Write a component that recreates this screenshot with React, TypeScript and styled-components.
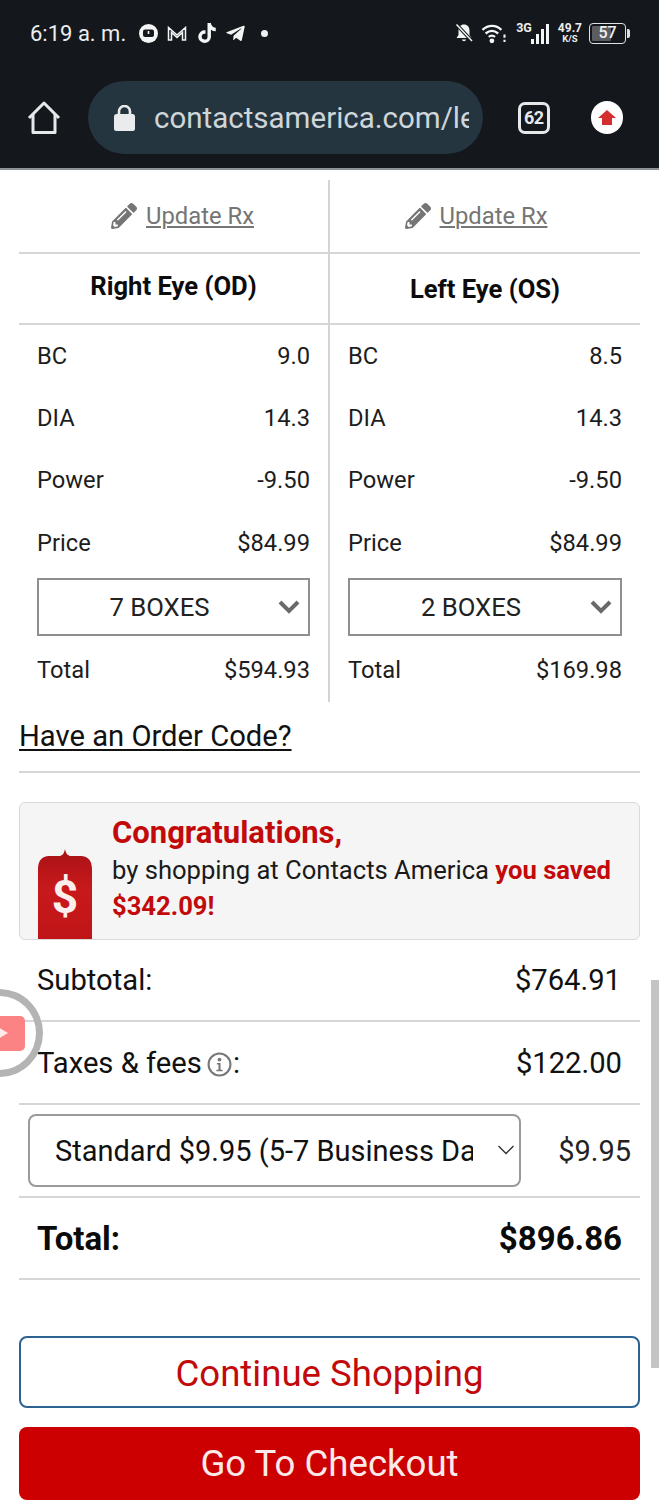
import React from "react";
import styled, { createGlobalStyle } from "styled-components";
import { FaPencilAlt, FaTiktok, FaTelegramPlane } from "react-icons/fa";

const Global = createGlobalStyle`
  html, body { margin: 0; padding: 0; background: #fff; }
  body { width: 659px; height: 1500px; overflow: hidden; font-family: Roboto, "Liberation Sans", sans-serif; color: #111; }
  * { box-sizing: border-box; }
`;

const Page = styled.div`
  position: relative;
  width: 659px;
  height: 1500px;
  overflow: hidden;
`;

const Header = styled.header`
  height: 170px;
  background: #14171c;
  border-bottom: 2px solid #8d9094;
  display: flex;
  flex-direction: column;
`;

const StatusBar = styled.div`
  height: 66px;
  padding: 0 29px 0 30px;
  display: flex;
  align-items: center;
  justify-content: space-between;
  color: #eceeef;
`;

const StatusGroup = styled.div`
  display: flex;
  align-items: center;
`;

const Clock = styled.span`
  font-size: 22px;
  margin-right: 12px;
`;

const StatusIconSlot = styled.span<{ $w: number }>`
  display: flex;
  width: ${(p) => p.$w}px;
  align-items: center;
  justify-content: center;
  color: #f4f5f5;
`;

const Dot = styled.span`
  width: 7px;
  height: 7px;
  border-radius: 50%;
  background: #eef0f0;
  margin-left: 7px;
`;

const NetLabel = styled.span`
  font-size: 12.5px;
  font-weight: 700;
  align-self: flex-start;
  margin: -3px -2px 0 2px;
  color: #eceeef;
`;

const Speed = styled.span`
  display: flex;
  flex-direction: column;
  align-items: center;
  font-weight: 700;
  font-size: 12px;
  line-height: 11px;
  margin: 0 7px 0 8px;
  & small { font-size: 9.5px; line-height: 9px; }
`;

const Battery = styled.span`
  position: relative;
  width: 37px;
  height: 21px;
  border: 1.5px solid #dfe1e2;
  border-radius: 4px;
  padding: 2px;
  display: flex;
`;

const BatteryFill = styled.span`
  flex: 0 0 62%;
  background: #5a5c5f;
  border-radius: 1px;
`;

const BatteryText = styled.span`
  position: absolute;
  inset: 0;
  text-align: center;
  font-size: 16px;
  line-height: 18px;
  font-weight: 500;
  color: #f0f0f0;
`;

const BatteryCap = styled.span`
  width: 3px;
  height: 9px;
  background: #dfe1e2;
  border-radius: 0 2px 2px 0;
  margin-left: 1px;
`;

const Toolbar = styled.div`
  display: flex;
  align-items: center;
  height: 73px;
  margin-top: 15px;
  padding: 0 36px 0 27px;
`;

const HomeSlot = styled.span`
  display: flex;
  width: 34px;
  margin-right: 27px;
`;

const UrlPill = styled.div`
  width: 395px;
  height: 73px;
  border-radius: 37px;
  background: #25353f;
  display: flex;
  align-items: center;
  padding: 0 14px 0 26px;
  color: #cfd6d9;
`;

const LockSlot = styled.span`
  display: flex;
  margin-right: 19px;
`;

const UrlText = styled.span`
  font-size: 29.5px;
  white-space: nowrap;
  overflow: hidden;
  flex: 1;
  min-width: 0;
`;

const TabCount = styled.span`
  width: 32px;
  height: 32px;
  margin-left: 35px;
  border: 3px solid #e6e8e9;
  border-radius: 7px;
  color: #e6e8e9;
  font-size: 18px;
  font-weight: 700;
  letter-spacing: -0.5px;
  display: flex;
  align-items: center;
  justify-content: center;
`;

const UpdateBadge = styled.span`
  width: 33px;
  height: 33px;
  margin-left: 41px;
  border-radius: 50%;
  background: #fff;
  display: flex;
  align-items: center;
  justify-content: center;
`;

const Content = styled.main`
  padding: 10px 19px 0;
`;

const EyeGrid = styled.div`
  display: grid;
  grid-template-columns: 311px 310px;
`;

const EyeColumn = styled.section<{ $left?: boolean }>`
  display: flex;
  flex-direction: column;
  height: 522px;
  ${(p) => (p.$left ? "border-right: 2px solid #d2d4d5;" : "")}
`;

const UpdateRow = styled.div<{ $shift: number }>`
  flex: none;
  height: 74px;
  display: flex;
  align-items: center;
  justify-content: center;
  gap: 9px;
  border-bottom: 2px solid #d5d6d7;
  color: #757575;
  font-size: 23.8px;
  padding-left: ${(p) => Math.max(p.$shift, 0)}px;
  padding-right: ${(p) => Math.max(-p.$shift, 0)}px;
  & a { color: inherit; text-decoration: underline; text-underline-offset: 2px; text-decoration-thickness: 1.5px; }
`;

const EyeHeading = styled.h3<{ $lift: number }>`
  flex: none;
  margin: 0;
  height: 71px;
  display: flex;
  align-items: center;
  justify-content: center;
  border-bottom: 2px solid #d5d6d7;
  font-size: 25.6px;
  font-weight: 700;
  color: #0c0c0c;
  padding-bottom: ${(p) => p.$lift}px;
`;

const EyeBody = styled.div`
  display: flex;
  flex-direction: column;
  padding: 0 18px;
`;

const SpecRow = styled.div<{ $h?: number }>`
  height: ${(p) => p.$h ?? 62}px;
  flex: none;
  display: flex;
  align-items: center;
  justify-content: space-between;
  font-size: 23.7px;
  color: #1d1d1d;
`;

const TotalSpec = styled(SpecRow)`
  padding-top: 2px;
`;

const BoxSelect = styled.div`
  position: relative;
  height: 58px;
  flex: none;
  border: 2px solid #8f8f8f;
  display: flex;
  align-items: center;
  justify-content: center;
  font-size: 25.7px;
  color: #222;
  padding-right: 28px;
  margin-top: 4px;
`;

const BoxChevron = styled.svg`
  position: absolute;
  right: 7px;
  top: 19px;
`;

const OrderCode = styled.div`
  height: 71px;
  display: flex;
  align-items: center;
  font-size: 29.2px;
  color: #111;
  text-decoration: underline;
  text-underline-offset: 3px;
  text-decoration-thickness: 2px;
  border-bottom: 2px solid #d5d6d7;
  padding-bottom: 2px;
`;

const SavingsCard = styled.div`
  margin-top: 29px;
  height: 138px;
  border: 1px solid #d9d9d9;
  border-radius: 6px;
  background: #f5f5f5;
  display: flex;
  align-items: flex-end;
  padding-left: 18px;
  overflow: hidden;
`;

const TagIcon = styled.svg`
  flex: none;
  margin-right: 20px;
  display: block;
`;

const SavingsText = styled.div`
  align-self: flex-start;
  padding-top: 11px;
  font-size: 25.6px;
  line-height: 36px;
  color: #1a1a1a;
`;

const SavingsTitle = styled.div`
  color: #c20a0a;
  font-weight: 700;
  font-size: 31px;
  line-height: 38px;
`;

const Red = styled.strong`
  color: #c20a0a;
  font-weight: 700;
`;

const SummaryRow = styled.div<{ $h: number; $right?: number }>`
  height: ${(p) => p.$h}px;
  display: flex;
  align-items: center;
  justify-content: space-between;
  padding: 0 ${(p) => p.$right ?? 19}px 0 18px;
  border-bottom: 2px solid #d5d6d7;
  font-size: 29.2px;
  color: #111;
`;

const InfoLabel = styled.span`
  display: flex;
  align-items: center;
`;

const InfoIcon = styled.svg`
  margin: 3px 1px 0 5px;
`;

const ShipField = styled.div`
  position: relative;
  width: 493px;
  height: 73px;
`;

const ShipSelect = styled.select`
  appearance: none;
  width: 100%;
  height: 100%;
  border: 2px solid #9a9a9a;
  border-radius: 8px;
  background: #fff;
  font-family: Roboto, sans-serif;
  font-size: 29px;
  color: #111;
  padding: 0 46px 0 25px;
`;

const ShipChevron = styled.svg`
  position: absolute;
  right: 6px;
  top: 30px;
  pointer-events: none;
`;

const ShipRow = styled.div`
  height: 93px;
  display: flex;
  align-items: center;
  justify-content: space-between;
  padding: 0 9px;
  border-bottom: 2px solid #d5d6d7;
  font-size: 29px;
  color: #222;
`;

const TotalRow = styled(SummaryRow)`
  font-weight: 700;
  font-size: 33px;
  color: #0b0b0b;
`;

const Actions = styled.div`
  display: flex;
  flex-direction: column;
  gap: 19px;
  margin-top: 56px;
`;

const ContinueButton = styled.button`
  height: 72px;
  border: 2px solid #2d6391;
  border-radius: 8px;
  background: #fff;
  color: #c20a0a;
  font-family: Roboto, sans-serif;
  font-size: 36.6px;
  padding: 2px 0 0;
`;

const CheckoutButton = styled.button`
  height: 73px;
  border: 0;
  border-radius: 8px;
  background: #cc0000;
  color: #fbeaea;
  font-family: Roboto, sans-serif;
  font-size: 36.6px;
  padding: 0;
`;

const Scrollbar = styled.div`
  position: absolute;
  right: 0;
  top: 980px;
  width: 8px;
  height: 388px;
  background: #c4c4c4;
`;

const Bubble = styled.div`
  position: absolute;
  left: -44px;
  top: 989px;
  width: 87px;
  height: 88px;
  border-radius: 50%;
  border: 7px solid #b4b4b4;
  display: flex;
  align-items: center;
  justify-content: flex-end;
  padding-right: 11px;
`;

const BubbleVideo = styled.div`
  width: 36px;
  height: 35px;
  background: #fb8383;
  border-radius: 5px;
  display: flex;
  align-items: center;
  justify-content: flex-end;
  padding-right: 17px;
  &::after {
    content: "";
    border-left: 12px solid #ffe9e9;
    border-top: 7px solid transparent;
    border-bottom: 7px solid transparent;
  }
`;

const ChevronBox = () => (
  <BoxChevron width="24" height="16" viewBox="0 0 24 16" fill="none">
    <path d="M3 3l9 9 9-9" stroke="#6a6a6a" strokeWidth="4" />
  </BoxChevron>
);

const Eye = ({
  left,
  title,
  shift,
  lift,
  bc,
  qty,
  total,
}: {
  left?: boolean;
  title: string;
  shift: number;
  lift: number;
  bc: string;
  qty: string;
  total: string;
}) => (
  <EyeColumn $left={left}>
    <UpdateRow $shift={shift}>
      <FaPencilAlt size={26} color="#757575" />
      <a>Update Rx</a>
    </UpdateRow>
    <EyeHeading $lift={lift}>{title}</EyeHeading>
    <EyeBody>
      <SpecRow><span>BC</span><span>{bc}</span></SpecRow>
      <SpecRow><span>DIA</span><span>14.3</span></SpecRow>
      <SpecRow><span>Power</span><span>-9.50</span></SpecRow>
      <SpecRow $h={63}><span>Price</span><span>$84.99</span></SpecRow>
      <BoxSelect>
        {qty}
        <ChevronBox />
      </BoxSelect>
      <TotalSpec $h={66}><span>Total</span><span>{total}</span></TotalSpec>
    </EyeBody>
  </EyeColumn>
);

export default function App() {
  return (
    <Page>
      <Global />
      <Header>
        <StatusBar>
          <StatusGroup>
            <Clock>6:19 a. m.</Clock>
            <StatusIconSlot $w={20}>
              <svg width="19" height="19" viewBox="0 0 19 19">
                <circle cx="9.5" cy="9.5" r="9.5" fill="#f4f5f5" />
                <rect x="4" y="5.5" width="11" height="7.5" rx="2" fill="#14171c" />
                <path d="M9.5 7v3" stroke="#f4f5f5" strokeWidth="1.6" />
              </svg>
            </StatusIconSlot>
            <StatusIconSlot $w={38}>
              <svg width="20" height="15" viewBox="0 0 19 15" fill="none" stroke="#f4f5f5" strokeWidth="1.5">
                <path d="M1 14V1.5L9.5 9 18 1.5V14h-3V6.5L9.5 11.5 4 6.5V14z" />
              </svg>
            </StatusIconSlot>
            <StatusIconSlot $w={21}><FaTiktok size={20} /></StatusIconSlot>
            <StatusIconSlot $w={37}><FaTelegramPlane size={21} /></StatusIconSlot>
            <Dot />
          </StatusGroup>
          <StatusGroup>
            <StatusIconSlot $w={20}>
              <svg width="18" height="20" viewBox="0 0 18 20">
                <path d="M9 1.5c-3.4 0-5.5 2.6-5.5 6V12L1.5 15h15l-2-3V7.5c0-3.4-2.1-6-5.5-6z" fill="#f4f5f5" />
                <path d="M6.8 16.5a2.3 2.3 0 0 0 4.4 0z" fill="#f4f5f5" />
                <path d="M1 1l16 17" stroke="#14171c" strokeWidth="3.5" />
                <path d="M1.5 1.5l15.5 16.5" stroke="#f4f5f5" strokeWidth="1.5" />
              </svg>
            </StatusIconSlot>
            <StatusIconSlot $w={40}>
              <svg width="26" height="21" viewBox="0 0 24 20" fill="none" stroke="#f4f5f5" strokeWidth="2.2">
                <path d="M1 6.5c5.5-5 13-5 18 0" />
                <path d="M4 10c3.8-3.2 8.2-3.2 12 0" />
                <path d="M7 13.2c2-1.6 4-1.6 6 0" />
                <circle cx="10" cy="17" r="1.2" fill="#f4f5f5" />
                <path d="M22 11v3M22 16v2" strokeWidth="2" />
              </svg>
            </StatusIconSlot>
            <NetLabel>3G</NetLabel>
            <StatusIconSlot $w={20}>
              <svg width="20" height="21" viewBox="0 0 20 21" fill="#f4f5f5">
                <rect x="1" y="16" width="3" height="5" />
                <rect x="6" y="11" width="3" height="10" />
                <rect x="11" y="6" width="3" height="15" />
                <rect x="16" y="1" width="3" height="20" />
              </svg>
            </StatusIconSlot>
            <Speed>49.7<small>K/S</small></Speed>
            <Battery>
              <BatteryFill />
              <BatteryText>57</BatteryText>
            </Battery>
            <BatteryCap />
          </StatusGroup>
        </StatusBar>
        <Toolbar>
          <HomeSlot>
            <svg width="34" height="34" viewBox="0 0 34 34" fill="none" stroke="#e6e8e9" strokeWidth="3" strokeLinejoin="round">
              <path d="M2 17 17 2l15 15" />
              <path d="M6 13v18.5h22V13" />
            </svg>
          </HomeSlot>
          <UrlPill>
            <LockSlot>
              <svg width="21" height="26" viewBox="0 0 21 26">
                <rect x="0" y="9" width="21" height="17" rx="2.5" fill="#e9ebec" />
                <path d="M5 10V6.5a5.5 5.5 0 0 1 11 0V10" fill="none" stroke="#e9ebec" strokeWidth="2.6" />
              </svg>
            </LockSlot>
            <UrlText>contactsamerica.com/lens</UrlText>
          </UrlPill>
          <TabCount>62</TabCount>
          <UpdateBadge>
            <svg width="18" height="15" viewBox="0 0 18 15">
              <path d="M9 0 18 8h-4v7H4V8H0z" fill="#d32f2f" />
            </svg>
          </UpdateBadge>
        </Toolbar>
      </Header>
      <Content>
        <EyeGrid>
          <Eye left title="Right Eye (OD)" shift={18} lift={6} bc="9.0" qty="7 BOXES" total="$594.93" />
          <Eye title="Left Eye (OS)" shift={-18} lift={0} bc="8.5" qty="2 BOXES" total="$169.98" />
        </EyeGrid>
        <OrderCode>Have an Order Code?</OrderCode>
        <SavingsCard>
          <TagIcon width="54" height="90" viewBox="0 0 54 90">
            <defs>
              <linearGradient id="tagFill" x1="0" y1="0" x2="0" y2="1">
                <stop offset="0" stopColor="#a81216" />
                <stop offset="0.45" stopColor="#c8191c" />
                <stop offset="1" stopColor="#bf1518" />
              </linearGradient>
            </defs>
            <path d="M0 90V20C0 12 4 7 11 7h10c3 0 5-2 6-7 1 5 3 7 6 7h10c7 0 11 5 11 13v70z" fill="url(#tagFill)" />
            <text x="27" y="64" textAnchor="middle" fontFamily="Roboto, sans-serif" fontWeight="700" fontSize="46" fill="#fdeeee">$</text>
          </TagIcon>
          <SavingsText>
            <SavingsTitle>Congratulations,</SavingsTitle>
            by shopping at Contacts America <Red>you saved $342.09!</Red>
          </SavingsText>
        </SavingsCard>
        <SummaryRow $h={82}>
          <span>Subtotal:</span>
          <span>$764.91</span>
        </SummaryRow>
        <SummaryRow $h={83} $right={18}>
          <InfoLabel>
            Taxes &amp; fees
            <InfoIcon width="25" height="25" viewBox="0 0 24 24" fill="none">
              <circle cx="12" cy="12" r="10.5" stroke="#777" strokeWidth="2" />
              <circle cx="12" cy="7.2" r="1.8" fill="#777" />
              <path d="M9.5 10.5H13v6.5h2v1.5H9v-1.5h2v-5H9.5z" fill="#777" />
            </InfoIcon>
            :
          </InfoLabel>
          <span>$122.00</span>
        </SummaryRow>
        <ShipRow>
          <ShipField>
            <ShipSelect defaultValue="std">
              <option value="std">Standard $9.95 (5-7 Business Days)</option>
            </ShipSelect>
            <ShipChevron width="18" height="12" viewBox="0 0 18 12" fill="none">
              <path d="M1.5 2 9 9.5 16.5 2" stroke="#333" strokeWidth="1.4" />
            </ShipChevron>
          </ShipField>
          <span>$9.95</span>
        </ShipRow>
        <TotalRow $h={82} $right={18}>
          <span>Total:</span>
          <span>$896.86</span>
        </TotalRow>
        <Actions>
          <ContinueButton>Continue Shopping</ContinueButton>
          <CheckoutButton>Go To Checkout</CheckoutButton>
        </Actions>
      </Content>
      <Scrollbar />
      <Bubble><BubbleVideo /></Bubble>
    </Page>
  );
}
